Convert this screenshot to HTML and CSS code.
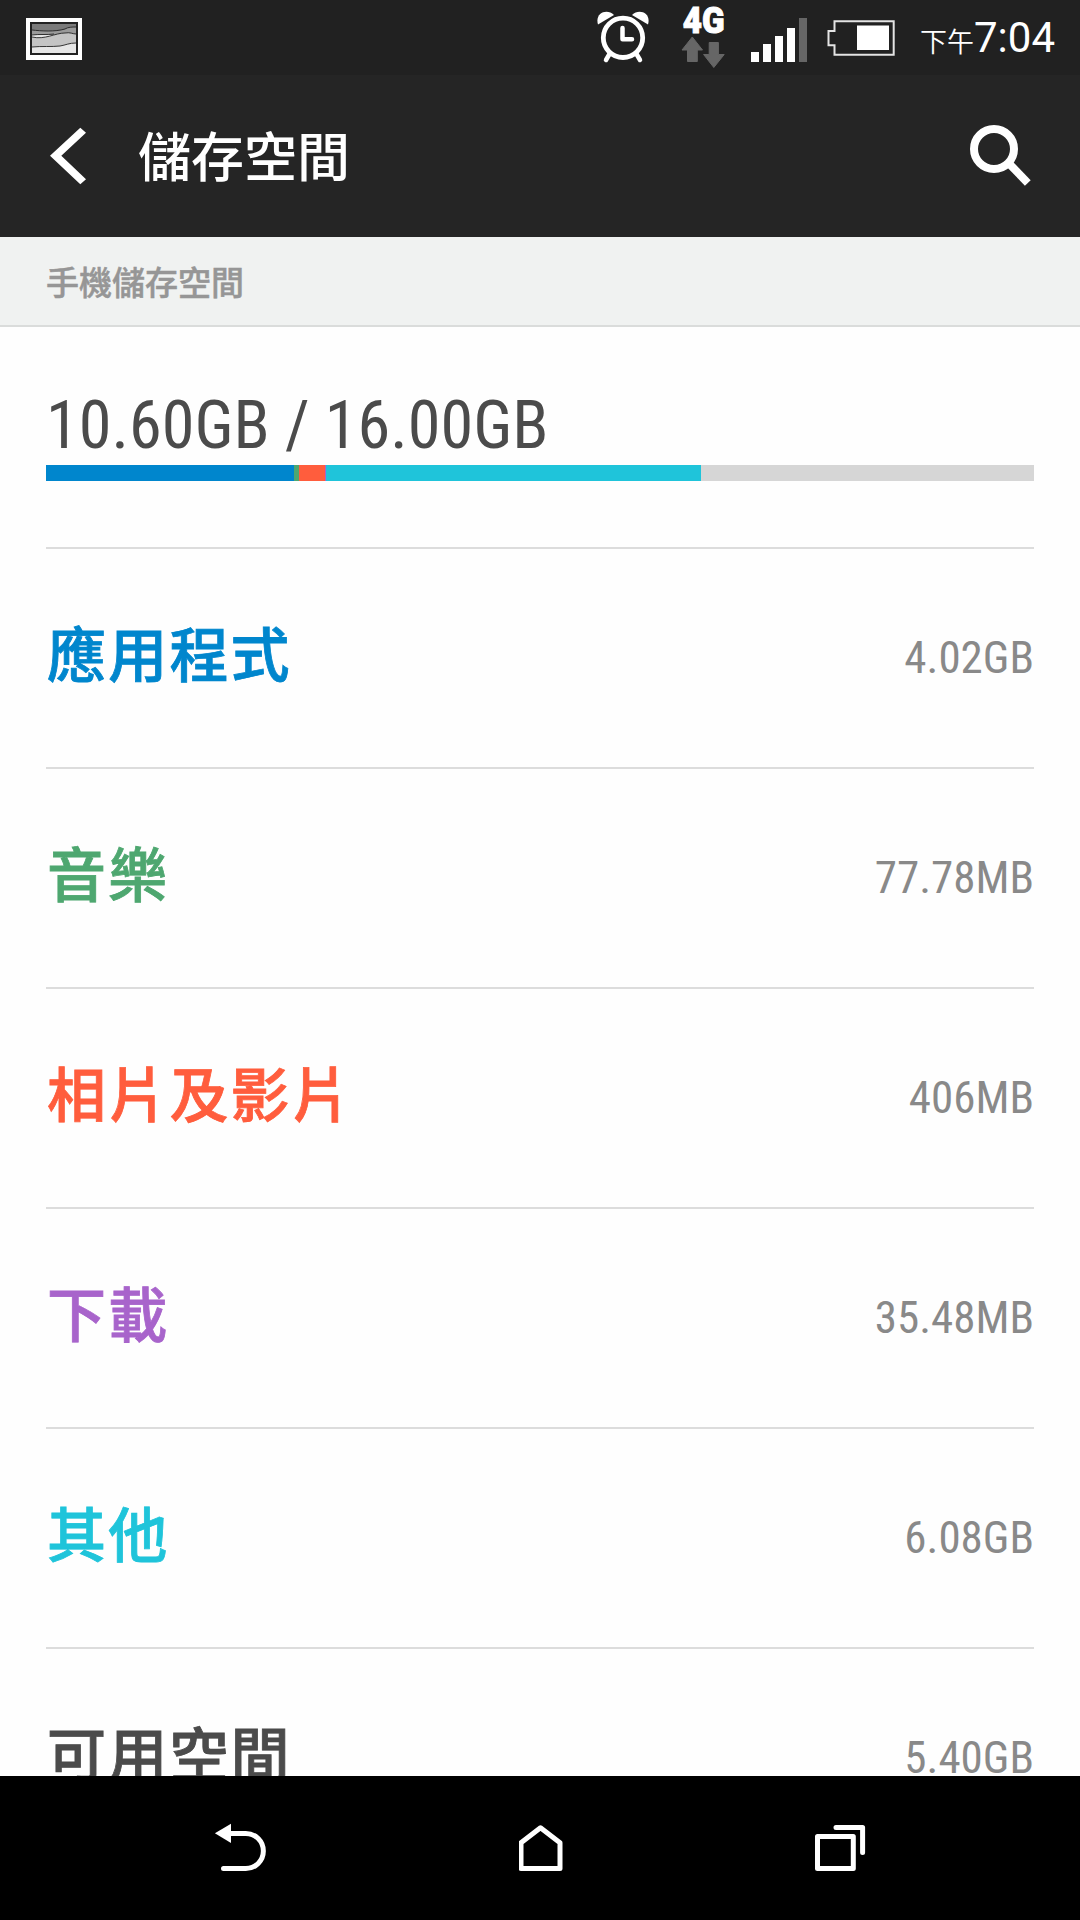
FILE: index.html
```html
<!DOCTYPE html>
<html lang="zh-Hant">
<head>
<meta charset="utf-8">
<title>儲存空間</title>
<link rel="stylesheet" href="styles.css">
</head>
<body>
<div class="screen">
  <div class="status-bar">
    <svg class="icon-picture" width="56" height="42" viewBox="26 18 56 42">
      <path fill="#fff" d="M26 18h56v42H26z"/>
      <path fill="#222" d="M30 22h48v33H30z"/>
      <path fill="#e6e6e6" d="M32 24h44v29H32z"/>
      <path fill="#7b7b7b" d="M32 24h44v11H32z"/>
      <path fill="#9a9a9a" d="M32 30c9 1 23 2 33-1 3-2 7-2 11-2v8H32z"/>
      <path fill="#c4c4c4" d="M32 37c13 3 23-4 33-4 5-1 8 1 11 1v9c-7 0-10 2-16 3-9 1-18 0-28 1z"/>
      <path fill="none" stroke="#222" stroke-width=".9" d="M32 30c9 1 23 2 33-1 3-2 7-2 11-2M32 35c8-1 14 0 22-1M32 37c13 3 23-4 33-4 5-1 8 1 11 1M32 47c10-1 19 0 28-1 6-1 9-3 16-3"/>
    </svg>
    <svg class="icon-alarm" width="54" height="56" viewBox="596 8 54 56">
      <g fill="#fff"><path d="M598 24.500C594.500 13 607 8 614 15z"/><path d="M648 24.500C651.500 13 639 8 632 15z"/></g>
      <g fill="none" stroke="#fff" stroke-width="4.500" stroke-linecap="round" stroke-linejoin="round"><circle cx="623" cy="37.800" r="19.700" stroke-width="4.800"/><path d="M622.500 28v11.200h9.500"/><path d="M609.500 54l-3.500 6M636.500 54l3.500 6"/></g>
    </svg>
    <div class="network">
      <span class="network-type">4G</span>
      <svg class="icon-data" width="44" height="32" viewBox="681 36 44 32"><path fill="#666" stroke="#666" stroke-linejoin="round" d="M692.300 37l10.200 13h-5.200v11.500h-9.800V50H682zM709.200 42.500h9.200v12h5.800l-10.400 13-10.200-13h5.600z"/></svg>
    </div>
    <svg class="icon-signal" width="56" height="44" viewBox="751 18 56 44"><path fill="#fff" d="M751 52h8v10h-8zM763 44h8v18h-8zM775 36h8v26h-8zM787 28h8v34h-8z"/><path fill="#666" d="M799 18h8v44h-8z"/></svg>
    <svg class="icon-battery" width="68" height="36" viewBox="827 19.500 68 36"><path fill="none" stroke="#e4e4e4" stroke-width="2" d="M834.500 20.800h59.200v33.400h-59.200v-9.400h-6v-14.300h6z"/><path fill="#fff" d="M857 25h32v24.500h-32z"/></svg>
    <div class="clock"><span class="clock-period">下午</span><span class="clock-time">7:04</span></div>
  </div>
  <header class="app-bar">
    <svg class="icon-back" width="38" height="58" viewBox="49 127 38 58"><path fill="#fff" d="M86 132.700l-5.700-5L50 155.700l30.300 28.500 5.700-5-24.700-23.500z"/></svg>
    <h1 class="title">儲存空間</h1>
    <svg class="icon-search" width="62" height="62" viewBox="969 125 62 62"><g fill="none" stroke="#fff"><circle cx="994" cy="149" r="20" stroke-width="8"/><path stroke-width="8" d="M1008.500 163l19.300 20"/></g></svg>
  </header>
  <h2 class="section">手機儲存空間</h2>
  <main class="content">
    <section class="summary">
      <div class="total">10.60GB / 16.00GB</div>
      <div class="bar">
        <span class="fill-apps" style="width:248px"></span><span class="fill-music" style="width:5px"></span><span class="fill-photos" style="width:26px"></span><span class="fill-downloads" style="width:1px"></span><span class="fill-other" style="width:375px"></span>
      </div>
    </section>
    <div class="row"><span class="label apps">應用程式</span><span class="value">4.02GB</span></div>
    <div class="row"><span class="label music">音樂</span><span class="value">77.78MB</span></div>
    <div class="row"><span class="label photos">相片及影片</span><span class="value">406MB</span></div>
    <div class="row"><span class="label downloads">下載</span><span class="value">35.48MB</span></div>
    <div class="row"><span class="label other">其他</span><span class="value">6.08GB</span></div>
    <div class="row"><span class="label free">可用空間</span><span class="value">5.40GB</span></div>
  </main>
  <nav class="nav-bar">
    <svg width="52" height="50" viewBox="214 1823 52 50"><path fill="#fff" d="M214.900 1833.300l16.100-9.600v19.300z"/><path fill="none" stroke="#fff" stroke-width="5" stroke-linecap="round" d="M230 1833.400h15.800a17.600 17.600 0 0 1 0 35.200H223.500"/></svg>
    <svg width="44" height="50" viewBox="518.500 1823 44 50"><path fill="none" stroke="#fff" stroke-width="5" stroke-linejoin="round" d="M520.500 1868.500v-25.700L540 1827.800l19.500 15v25.700z"/></svg>
    <svg width="52" height="50" viewBox="815 1823 52 50"><g fill="none" stroke="#fff" stroke-width="5" stroke-linecap="round" stroke-linejoin="round"><path d="M817.500 1836.500h35.800v32h-35.800z"/><path d="M836 1827.500h26.600v25"/></g></svg>
  </nav>
</div>
</body>
</html>
```
FILE: styles.css
```css
* { box-sizing: border-box; }
body {
  margin: 0;
  font-family: Roboto, "Noto Sans CJK TC", sans-serif;
  font-weight: 400;
}
svg { display: block; flex: none; }
.screen {
  width: 1080px;
  height: 1920px;
  display: flex;
  flex-direction: column;
  overflow: hidden;
  background: #fefefe;
}

/* Status bar */
.status-bar {
  flex: none;
  height: 75px;
  display: flex;
  align-items: flex-start;
  padding: 8px 25px 0 26px;
  background: #212121;
  color: #fff;
}
.icon-picture { margin-top: 10px; }
.icon-alarm { margin-left: 514px; }
.network { width: 44px; margin-left: 31px; }
.network-type {
  display: block;
  width: 44px;
  height: 28px;
  font-size: 36px;
  font-weight: 900;
  line-height: 27px;
  text-align: center;
  white-space: nowrap;
  -webkit-text-stroke: 1px #fff;
  transform: scaleX(.92);
}
.icon-signal { margin: 10px 0 0 26px; }
.icon-battery { margin: 11.5px 0 0 20px; }
.clock {
  display: flex;
  align-items: baseline;
  margin-left: auto;
  line-height: 60px;
  white-space: nowrap;
}
.clock-period { font-size: 27px; font-weight: 350; }
.clock-time { font-size: 42px; }

/* App bar */
.app-bar {
  flex: none;
  height: 162px;
  display: flex;
  align-items: center;
  padding: 0 49px;
  background: #252525;
  color: #fff;
}
.title {
  flex: 1;
  margin: 0;
  padding: 6px 0 0 51px;
  font-size: 53px;
  font-weight: 500;
  line-height: 80px;
}

.section {
  flex: none;
  height: 90px;
  margin: 0;
  padding: 2px 0 0 46px;
  border-bottom: 2px solid #dadcdb;
  background: #f0f2f1;
  color: #969696;
  font-size: 33px;
  font-weight: 500;
  line-height: 90px;
  -webkit-text-stroke: .5px #969696;
}

/* Storage list */
.content {
  flex: 1;
  min-height: 0;
  padding: 0 46px;
  overflow: hidden;
}
.summary {
  height: 222px;
  padding-top: 60px;
  border-bottom: 2px solid #dcdcdc;
}
.total {
  height: 78px;
  color: #4b4b4b;
  font-family: "Roboto Condensed", Roboto, sans-serif;
  font-stretch: 75%;
  font-size: 66.3px;
  line-height: 76px;
  white-space: nowrap;
}
.bar {
  display: flex;
  height: 16px;
  background: #d6d6d6;
}
.row {
  height: 220px;
  display: flex;
  align-items: center;
  justify-content: space-between;
  border-bottom: 2px solid #dcdcdc;
}
.label {
  padding: 0 0 13px 1px;
  font-size: 59px;
  font-weight: 500;
  letter-spacing: 2.2px;
  -webkit-text-stroke: .8px currentColor;
}
.value {
  padding-bottom: 2px;
  color: #898989;
  font-family: "Roboto Condensed", Roboto, sans-serif;
  font-stretch: 75%;
  font-size: 45px;
}
.apps { color: #0086cd; }
.music { color: #4ea770; }
.photos { color: #ff5d3d; }
.downloads { color: #a864cb; }
.other { color: #1fc4da; }
.free { color: #4b4b4b; }
.fill-apps { background: #0086cd; }
.fill-music { background: #4ea770; }
.fill-photos { background: #ff5d3d; }
.fill-downloads { background: #a864cb; }
.fill-other { background: #1fc4da; }

/* Navigation bar */
.nav-bar {
  flex: none;
  height: 144px;
  display: flex;
  align-items: center;
  justify-content: space-between;
  padding: 0 213px 0 214px;
  background: #000;
}
```
